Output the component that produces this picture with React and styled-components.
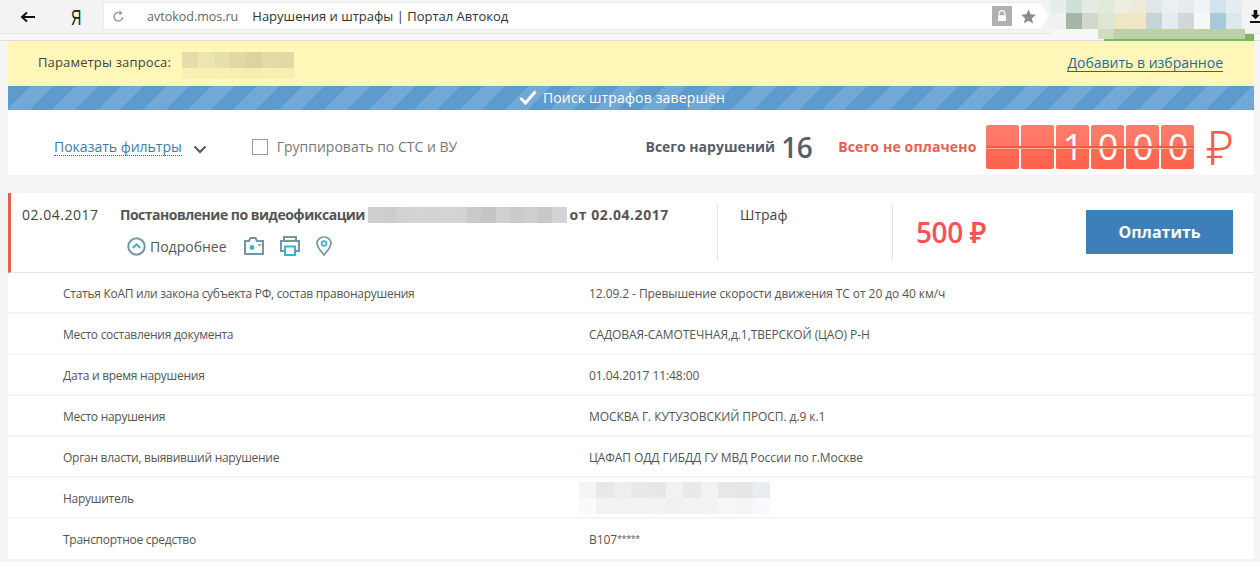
import React from 'react';
import styled, { createGlobalStyle } from 'styled-components';

const Global = createGlobalStyle`
  html, body { margin: 0; padding: 0; }
  body {
    background: #f4f4f4;
    font-family: "Open Sans", "Noto Sans", sans-serif;
    color: #4d4d4d;
    overflow: hidden;
  }
`;

const topBlur = [
  ['#e6eeec', '#cfe0d6', '#e4ebe4', '#deeadb', '#eeeee2', '#ecebdc', '#e0e6ea', '#eaeff0', '#e8ebed', '#f0f3f4', '#d3e2ef', '#e6edf0'],
  ['#eef3f1', '#a3b6a7', '#d3d8cb', '#dde7d3', '#efe7c3', '#efe8c4', '#c6d3d8', '#e4ecef', '#d5d7d7', '#f6f7f7', '#a8cad6', '#dce8ea'],
];
const queryBlur = [
  ['#e3dda9', '#ece5ae', '#e6e0aa', '#e0d9a2', '#dcd49e', '#e2dba6', '#e0d9a4'],
  ['#f6f0b4', '#f5efb2', '#f6f0b4', '#f5efb2', '#f4eeb2', '#f5efb2', '#f5efb3'],
];
const numberBlur = [
  ['#d0cfcf', '#cfcdcb', '#d2d2d2', '#d3d4d6', '#d2d3d5', '#d3d4d5', '#d2d3d4', '#cbcaca', '#c6c5c5', '#d0d0d0', '#cbc9c9', '#cfcecf', '#c9c8c9', '#d2d3d5'],
];
const offenderBlur = [
  ['#f5f5f5', '#e8e8e8', '#eeeeee', '#e9e9e9', '#e6e7e7', '#f2f2f2', '#e8e9e9', '#f2f2f2', '#e8e8e8', '#e7e6e6', '#e9edf1'],
  ['#fafafa', '#f1f2f4', '#f0f2f4', '#f0f2f4', '#f4f2f4', '#f0f1f3', '#f1f2f4', '#f3f3f4', '#f6f6f6', '#f4f5f6', '#f8f9fa'],
];

const details = [
  ['Статья КоАП или закона субъекта РФ, состав правонарушения', '12.09.2 - Превышение скорости движения ТС от 20 до 40 км/ч'],
  ['Место составления документа', 'САДОВАЯ-САМОТЕЧНАЯ,д.1,ТВЕРСКОЙ (ЦАО) Р-Н'],
  ['Дата и время нарушения', '01.04.2017 11:48:00'],
  ['Место нарушения', 'МОСКВА Г. КУТУЗОВСКИЙ ПРОСП. д.9 к.1'],
  ['Орган власти, выявивший нарушение', 'ЦАФАП ОДД ГИБДД ГУ МВД России по г.Москве'],
  ['Нарушитель', null],
  ['Транспортное средство', 'В107', '*****'],
];

const Blur = ({ rows, w, h }) => (
  <BlurBox>
    {rows.map((row, i) => (
      <BlurRow key={i} $h={h[i]}>
        {row.map((c, j) => <BlurCell key={j} $w={w} $c={c} />)}
      </BlurRow>
    ))}
  </BlurBox>
);

export default function App() {
  return (
    <>
      <Global />
      <BrowserBar>
        <BackIcon viewBox="0 0 16 12">
          <path d="M15 6H3M7 1.5 2 6l5 4.5" fill="none" stroke="#111" strokeWidth="2" />
        </BackIcon>
        <YaLogo>Я</YaLogo>
        <Address>
          <ReloadIcon viewBox="1.5 .5 9 10">
            <path d="M9.5 6.5A3.6 3.6 0 1 1 7.8 3" fill="none" stroke="#999" strokeWidth="1.2" />
            <path d="M6.8 .8 9.4 3 6.8 5z" fill="#999" />
          </ReloadIcon>
          <Host>avtokod.mos.ru</Host>
          <PageTitle>Нарушения и штрафы | Портал Автокод</PageTitle>
          <LockBox>
            <svg width="14" height="16" viewBox="0 0 14 16">
              <path d="M3 7V4.5a4 4 0 0 1 8 0V7" fill="none" stroke="#fff" strokeWidth="1.6" />
              <rect x="1.5" y="7" width="11" height="8" fill="#fff" />
            </svg>
          </LockBox>
          <StarIcon viewBox="0 0 24 24">
            <path d="m12 2 3 6.9 7.4.7-5.6 4.9 1.7 7.3L12 17.9l-6.5 3.9 1.7-7.3L1.6 9.6 9 8.9z" fill="#8c8c8c" />
          </StarIcon>
        </Address>
        <TabBlur>
          <Blur rows={topBlur} w={16} h={[13, 16]} />
          <TabBlurTail />
          <TabProgress />
        </TabBlur>
        <DownloadIcon viewBox="0 0 12 16">
          <path d="M4 1h4v5h3L6 11 1 6h3zM0 13h12v2H0z" fill="#111" />
        </DownloadIcon>
      </BrowserBar>
      <BarStrip />

      <Page>
        <QueryBar>
          <QueryLeft>
            <span>Параметры запроса:</span>
            <QueryBlur><Blur rows={queryBlur} w={16} h={[16, 11]} /></QueryBlur>
          </QueryLeft>
          <FavLink>Добавить в избранное</FavLink>
        </QueryBar>

        <StatusBar>
          <svg width="18" height="15" viewBox="0 0 18 15">
            <path d="M1.5 8 6.5 13 16.5 1.5" fill="none" stroke="#fff" strokeWidth="3" />
          </svg>
          Поиск штрафов завершён
        </StatusBar>

        <Toolbar>
          <FilterLink>Показать фильтры</FilterLink>
          <FilterChevron viewBox="0 0 14 9">
            <path d="M1.5 1.5 7 7l5.5-5.5" fill="none" stroke="#555" strokeWidth="2" />
          </FilterChevron>
          <CheckLabel>
            <CheckBox />
            Группировать по СТС и ВУ
          </CheckLabel>
          <Totals>
            <TotalLabel>Всего нарушений</TotalLabel>
            <TotalCount>16</TotalCount>
            <UnpaidLabel>Всего не оплачено</UnpaidLabel>
            <Tiles>
              {['', '', '1', '0', '0', '0'].map((d, i) => <Tile key={i}>{d}</Tile>)}
            </Tiles>
            <BigRuble>₽</BigRuble>
          </Totals>
        </Toolbar>

        <Card>
          <FineHead>
            <FineDate>02.04.2017</FineDate>
            <FineMain>
              <FineTitle>
                Постановление по видеофиксации
                <Blur rows={numberBlur} w={14.2} h={[16]} />
                <FineTitleDate>от 02.04.2017</FineTitleDate>
              </FineTitle>
              <FineActions>
                <MoreIcon viewBox="0 0 18 18">
                  <circle cx="9" cy="9" r="7.8" fill="none" stroke="#7396a6" strokeWidth="1.9" />
                  <path d="M5.5 10.5 9 7l3.5 3.5" fill="none" stroke="#3bb0d0" strokeWidth="1.9" />
                </MoreIcon>
                <MoreText>Подробнее</MoreText>
                <ActionIcon viewBox="0 0 20 18" $w={20} $ml={17}>
                  <path d="M1 17V4h4l1.5-3h5L13 4h6v13z" fill="none" stroke="#7396a6" strokeWidth="2" />
                  <circle cx="8" cy="10.5" r="2.4" fill="#3bb0d0" />
                  <rect x="14.5" y="7" width="2" height="2" fill="#3bb0d0" />
                </ActionIcon>
                <ActionIcon viewBox="0 0 20 20" $w={20} $ml={16}>
                  <path d="M4 5V1h12v4M4 15H1V5h18v10h-3" fill="none" stroke="#7396a6" strokeWidth="2" />
                  <path d="M5 10.5h10V19H5z" fill="none" stroke="#3bb0d0" strokeWidth="2" />
                </ActionIcon>
                <ActionIcon viewBox="0 0 16 20" $w={16} $ml={16}>
                  <path d="M8 19C4 14 1 11 1 7.5a7 6.5 0 0 1 14 0C15 11 12 14 8 19z" fill="none" stroke="#7396a6" strokeWidth="1.7" />
                  <circle cx="8" cy="7.5" r="2.4" fill="none" stroke="#3bb0d0" strokeWidth="1.7" />
                </ActionIcon>
              </FineActions>
            </FineMain>
            <FineType>Штраф</FineType>
            <FineSum>500 ₽</FineSum>
            <PayButton>Оплатить</PayButton>
          </FineHead>
          {details.map(([label, value, masked]) => (
            <DetailRow key={label}>
              <DetailLabel>{label}</DetailLabel>
              {value ? <DetailValue>{value}{masked && <Stars>{masked}</Stars>}</DetailValue> : (
                <OffenderBlur><Blur rows={offenderBlur} w={17.4} h={[16, 16]} /></OffenderBlur>
              )}
            </DetailRow>
          ))}
        </Card>
      </Page>
    </>
  );
}

const BlurBox = styled.div`
  display: inline-flex;
  flex-direction: column;
  vertical-align: middle;
  flex: none;
`;

const BlurRow = styled.div`
  display: flex;
  height: ${p => p.$h}px;
`;

const BlurCell = styled.div`
  width: ${p => p.$w}px;
  background: ${p => p.$c};
`;

const BrowserBar = styled.div`
  height: 34px;
  display: flex;
  align-items: flex-start;
  background: #f3f3f3;
  border-bottom: 1px solid #e2e2e2;
  box-sizing: border-box;
`;

const BarStrip = styled.div`
  height: 7px;
  background: #f7f7f7;
  border-bottom: 1px solid #dedede;
  box-sizing: border-box;
`;

const BackIcon = styled.svg`
  width: 16px;
  height: 12px;
  margin: 11px 0 0 20px;
  flex: none;
`;

const YaLogo = styled.div`
  width: 32px;
  margin-left: 35px;
  font: 22px/35px "Liberation Sans", sans-serif;
  color: #222;
  transform: scaleX(0.65);
  transform-origin: left center;
  flex: none;
`;

const Address = styled.div`
  width: 946px;
  height: 28px;
  margin-top: 2px;
  box-sizing: border-box;
  display: flex;
  align-items: center;
  background: #fff;
  border: 1px solid #ebebeb;
  padding: 0 0 0 9px;
  clip-path: polygon(0 0, 99% 0, 100% 50%, 99% 100%, 0 100%);
  flex: none;
`;

const ReloadIcon = styled.svg`
  width: 11px;
  height: 12px;
  flex: none;
`;

const Host = styled.span`
  margin-left: 23px;
  color: #666;
  font-size: 12.5px;
`;

const PageTitle = styled.span`
  margin-left: 14px;
  color: #333;
  font-size: 13px;
`;

const LockBox = styled.div`
  width: 20px;
  height: 20px;
  margin-left: auto;
  background: #b0b0b0;
  display: flex;
  align-items: center;
  justify-content: center;
  svg { width: 10px; height: 12px; }
`;

const StarIcon = styled.svg`
  width: 17px;
  height: 17px;
  margin: 0 11px 0 8px;
`;

const TabBlur = styled.div`
  position: relative;
  margin-left: 1px;
  width: 200px;
  height: 34px;
  flex: none;
`;

const TabBlurTail = styled.div`
  position: absolute;
  left: 0;
  top: 29px;
  width: 195px;
  height: 10px;
  background: linear-gradient(90deg, #f7f7f7 0 48px, #cfdcc0 48px 64px, #bcd1a8 64px);
`;

const TabProgress = styled.div`
  position: absolute;
  left: 54px;
  top: 39px;
  width: 150px;
  height: 2px;
  background: #85b164;

  &::after {
    content: '';
    position: absolute;
    right: 0;
    bottom: 0;
    width: 9px;
    height: 7px;
    background: #85b164;
  }
`;

const DownloadIcon = styled.svg`
  width: 11px;
  height: 15px;
  margin: 9px 0 0 0;
  flex: none;
`;

const Page = styled.div`
  margin: 0 6px 0 8px;
`;

const QueryBar = styled.div`
  height: 45px;
  display: flex;
  align-items: center;
  justify-content: space-between;
  padding: 0 31px 3px 30px;
  box-sizing: border-box;
  background: #fff7b8;
  font-size: 13px;
  letter-spacing: 0.15px;
  color: #444;
`;

const QueryLeft = styled.div`
  display: flex;
  align-items: center;
  gap: 11px;
`;

const QueryBlur = styled.div`
  margin-top: 6px;
`;

const FavLink = styled.a`
  margin-top: 2px;
  font-size: 14px;
  letter-spacing: 0;
  color: #1f6a9e;
  border-bottom: 1px solid #1f6a9e;
  line-height: 17px;
`;

const StatusBar = styled.div`
  height: 24px;
  display: flex;
  align-items: center;
  justify-content: center;
  gap: 6px;
  padding: 0 18px 2px 0;
  box-sizing: border-box;
  color: #fff;
  font-size: 14px;
  letter-spacing: 0.15px;
  background: repeating-linear-gradient(
    135deg,
    #5e9bcc 0 16px,
    #74a8d4 16px 32px
  );
`;

const Toolbar = styled.div`
  height: 65px;
  box-sizing: border-box;
  display: flex;
  align-items: center;
  padding: 8px 0 0 46px;
  background: #fff;
`;

const FilterLink = styled.a`
  font-size: 14px;
  line-height: 17px;
  color: #3a7da8;
  border-bottom: 1px dotted #2a6f9e;
`;

const FilterChevron = styled.svg`
  width: 14px;
  height: 9px;
  margin: 5px 0 0 11px;
`;

const CheckLabel = styled.label`
  display: flex;
  align-items: center;
  gap: 9px;
  margin-left: 45px;
  font-size: 14px;
  color: #777;
`;

const CheckBox = styled.span`
  width: 14px;
  height: 14px;
  border: 1px solid #999;
  background: #fff;
`;

const Totals = styled.div`
  margin-left: auto;
  display: flex;
  align-items: center;
  padding-right: 20px;
`;

const TotalLabel = styled.span`
  font-size: 14px;
  font-weight: 700;
  color: #555e68;
`;

const TotalCount = styled.span`
  margin-left: 6px;
  font-size: 28px;
  line-height: 44px;
  font-weight: 600;
  letter-spacing: -0.5px;
  color: #555e68;
`;

const UnpaidLabel = styled.span`
  margin-left: 26px;
  font-size: 14px;
  font-weight: 700;
  letter-spacing: 0.15px;
  color: #e8604c;
`;

const Tiles = styled.div`
  display: flex;
  gap: 2px;
  margin-left: 10px;
`;

const Tile = styled.div`
  position: relative;
  width: 33px;
  height: 44px;
  border-radius: 2px;
  background: linear-gradient(#ff7d6a, #ff7464 48%, #ff6a56 52%, #ff624e);
  color: #fff;
  font-size: 36px;
  line-height: 44px;
  text-align: center;

  &::after {
    content: '';
    position: absolute;
    left: 0;
    right: -2px;
    top: 21px;
    height: 2px;
    background: #ee5a46;
    box-shadow: 0 1px 0 #ffb0a2;
  }

  &:last-child::after {
    right: 0;
  }
`;

const BigRuble = styled.span`
  margin-left: 12px;
  font-size: 48px;
  font-weight: 300;
  line-height: 44px;
  color: #fa5a46;
`;

const Card = styled.div`
  margin-top: 18px;
  background: #fff;
`;

const FineHead = styled.div`
  height: 80px;
  box-sizing: border-box;
  display: flex;
  align-items: flex-start;
  border-left: 3px solid #e8604c;
  border-bottom: 1px solid #e6e6e6;
`;

const FineDate = styled.div`
  width: 109px;
  padding: 13px 0 0 11px;
  box-sizing: border-box;
  font-size: 14px;
  letter-spacing: 0.5px;
  line-height: 18px;
  color: #444;
  flex: none;
`;

const FineMain = styled.div`
  width: 597px;
  flex: none;
  padding-top: 13px;
`;

const FineTitle = styled.div`
  display: flex;
  align-items: center;
  gap: 3px;
  font-size: 14px;
  letter-spacing: -0.5px;
  line-height: 18px;
  font-weight: 700;
  color: #555;
`;

const FineTitleDate = styled.span`
  letter-spacing: 0.55px;
`;

const FineActions = styled.div`
  display: flex;
  align-items: center;
  margin: 12px 0 0 7px;
`;

const MoreIcon = styled.svg`
  width: 19px;
  height: 19px;
`;

const MoreText = styled.span`
  margin-left: 4px;
  font-size: 14px;
  color: #555;
`;

const ActionIcon = styled.svg`
  width: ${p => p.$w}px;
  height: 20px;
  margin-left: ${p => p.$ml}px;
`;

const FineType = styled.div`
  width: 175px;
  height: 57px;
  margin-top: 11px;
  padding: 2px 0 0 22px;
  box-sizing: border-box;
  border-left: 1px solid #e6e6e6;
  font-size: 14px;
  line-height: 18px;
  color: #444;
  flex: none;
`;

const FineSum = styled.div`
  width: 194px;
  height: 57px;
  margin-top: 11px;
  padding-left: 23px;
  box-sizing: border-box;
  border-left: 1px solid #e6e6e6;
  font-size: 28px;
  font-weight: 600;
  letter-spacing: -0.4px;
  line-height: 56px;
  color: #fa5252;
  flex: none;
`;

const PayButton = styled.button`
  width: 147px;
  height: 44px;
  margin-top: 17px;
  border: none;
  background: #3d7fb9;
  color: #fff;
  font-family: inherit;
  font-size: 16px;
  font-weight: 700;
  flex: none;
`;

const DetailRow = styled.div`
  height: 41px;
  box-sizing: border-box;
  display: flex;
  align-items: center;
  padding: 1px 0 0 55px;
  border-bottom: 2px solid #f5f5f5;
  font-size: 12px;
  color: #555;

  &:last-child {
    border-bottom: none;
    height: 40px;
    padding-top: 0;
  }
`;

const DetailLabel = styled.div`
  width: 526px;
  flex: none;
  letter-spacing: -0.27px;
`;

const DetailValue = styled.div`
  color: #555;
  letter-spacing: -0.08px;
`;

const Stars = styled.span`
  position: relative;
  top: -2px;
  font-size: 9px;
  letter-spacing: -0.4px;
`;

const OffenderBlur = styled.div`
  margin-left: -10px;
`;
